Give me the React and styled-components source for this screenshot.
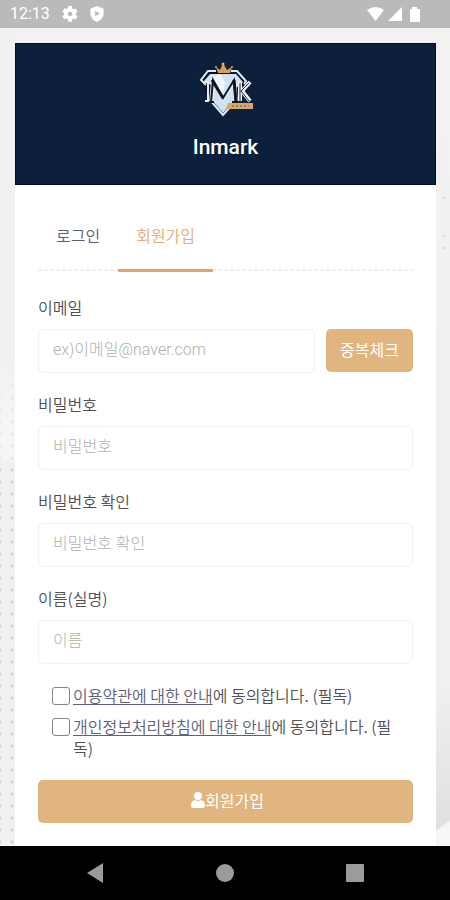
import React, { useState } from "react";
import styled, { createGlobalStyle } from "styled-components";

const GlobalStyle = createGlobalStyle`
  *, *::before, *::after { box-sizing: border-box; }
  body {
    margin: 0;
    font-family: "Noto Sans CJK KR", "Noto Sans", sans-serif;
    font-size: 16px;
    font-weight: 350;
    line-height: 22px;
    color: #505050;
  }
`;

const Screen = styled.div`
  display: flex;
  flex-direction: column;
  height: 100vh;
  background: #f1f1f1;
`;

const StatusBar = styled.header`
  display: flex;
  align-items: center;
  flex: none;
  height: 28px;
  padding: 0 30px 0 10px;
  gap: 12px;
  background: #bababa;
  color: #fff;
  font: 400 16px/28px Roboto, sans-serif;

  svg { display: block; }
`;

const SystemIcons = styled.div`
  display: flex;
  align-items: center;
  gap: 4px;
  margin-left: auto;
`;

const Viewport = styled.main`
  flex: 1;
  min-height: 0;
  overflow: hidden;
  padding: 15px 14px 0 15px;
  background:
    linear-gradient(#f1f1f1 320px, #f9f9f980 400px, #fafafa80 430px, transparent 434px) 0 0 / 15px 100% no-repeat,
    radial-gradient(circle at 12px 6px, #cfcfcf 1px, transparent 2px) 0 4px / 15px 12px repeat-y,
    radial-gradient(circle at 0 6px, #d4d4d4 1px, transparent 2px) 0 4px / 12px 12px repeat-y,
    radial-gradient(circle at 6px 6px, #dddddd 1px, transparent 2px) 100% 164px / 12px 12px no-repeat,
    radial-gradient(circle at 6px 6px, #dddddd 1px, transparent 2px) 100% 202px / 12px 12px no-repeat,
    radial-gradient(circle at 6px 6px, #dddddd 1px, transparent 2px) 100% 214px / 12px 12px no-repeat,
    linear-gradient(145deg, transparent 50%, #f6f6f6 54%) 100% 100% / 24px 36px no-repeat,
    linear-gradient(#f1f1f1, #f1f1f1) 0 0 / 15px 100% no-repeat,
    linear-gradient(#f2f2f2, #f0f0f0 80%, #dedede);
`;

const Card = styled.section`
  min-height: 100%;
  background: #fff;
`;

const Brand = styled.div`
  display: flex;
  flex-direction: column;
  align-items: center;
  height: 142px;
  padding-top: 18px;
  background: #0d203b;
  border: 1px solid #040b2c;
`;

const BrandName = styled.h1`
  margin: 16px 0 0;
  color: #fff;
  font: 500 21px/26px Roboto, sans-serif;
`;

const Content = styled.div`
  padding: 26px 23px 24px;
`;

const Tabs = styled.nav`
  display: flex;
  height: 60px;
  background: repeating-linear-gradient(90deg, #eeeff2 0 4px, transparent 4px 6px) 0 100% / 100% 2px no-repeat;
`;

const Tab = styled.a`
  height: 61px;
  padding: 13px 18px 0;
  border-bottom: 3px solid ${(p) => (p.$active ? "#e0a566" : "transparent")};
  border-radius: 1px;
  color: ${(p) => (p.$active ? "#e0ad72" : "#5b5e70")};
  text-decoration: none;
`;

const Form = styled.form`
  display: flex;
  flex-direction: column;
  gap: 20px;
  padding-top: 25px;
`;

const Field = styled.div`
  display: flex;
  flex-direction: column;
  gap: 11px;
`;

const Label = styled.label`
  line-height: 22px;
`;

const InputRow = styled.div`
  display: flex;
  gap: 11px;
`;

const TextInput = styled.input`
  flex: 1;
  min-width: 0;
  height: 44px;
  padding: 0 14px 4px;
  border: 1px solid #eff1f3;
  border-radius: 5px;
  background: #fff;
  color: #464646;
  font: inherit;
  font-family: Roboto, "Noto Sans CJK KR", sans-serif;
  font-weight: 300;

  &::placeholder { color: #b0b0b0; opacity: 1; }
`;

const Button = styled.button`
  display: flex;
  align-items: center;
  justify-content: center;
  height: 43px;
  padding: 0 14px 4px;
  border: 0;
  border-radius: 5px;
  background: #e0b580;
  color: #fff;
  font: inherit;
  font-weight: 400;
  white-space: nowrap;
  cursor: pointer;
`;

const SubmitButton = styled(Button)`
  padding-left: 18px;
`;

const Agreements = styled.div`
  display: flex;
  flex-direction: column;
  gap: 9px;
  padding: 0 14px 1px;
`;

const Agreement = styled.div`
  display: flex;
  align-items: flex-start;
  gap: 3px;
  word-break: break-all;
`;

const Checkbox = styled.input`
  appearance: none;
  flex: none;
  width: 18px;
  height: 18px;
  margin: 3px 0 0;
  border: 1px solid #858585;
  border-radius: 3px;
  background: #fff;

  &:checked { background: #e0b580; }
`;

const TermsLink = styled.a`
  color: #5c6078;
  text-decoration: underline;
  text-decoration-thickness: 1px;
  text-underline-offset: 2px;
`;

const NavBar = styled.footer`
  display: flex;
  flex: none;
  align-items: center;
  justify-content: space-between;
  height: 54px;
  padding: 0 85px;
  background: #000;
`;

const NavButton = styled.button`
  display: flex;
  padding: 0;
  border: 0;
  background: none;
  color: #9b9b9b;
`;

const GearIcon = () => (
  <svg width="16" height="16" viewBox="2 2 20 20" fill="currentColor" aria-hidden="true">
    <path d="M19.14 12.94c.04-.3.06-.61.06-.94s-.02-.64-.07-.94l2.03-1.58a.49.49 0 0 0 .12-.61l-1.92-3.32a.49.49 0 0 0-.59-.22l-2.39.96a7 7 0 0 0-1.62-.94l-.36-2.54A.48.48 0 0 0 13.92 2h-3.84a.48.48 0 0 0-.48.41l-.36 2.54c-.59.24-1.13.57-1.62.94l-2.39-.96a.48.48 0 0 0-.59.22L2.72 8.87a.48.48 0 0 0 .12.61l2.03 1.58a7 7 0 0 0 0 1.88l-2.03 1.58a.49.49 0 0 0-.12.61l1.92 3.32c.12.22.37.29.59.22l2.39-.96c.5.38 1.03.7 1.62.94l.36 2.54c.05.24.24.41.48.41h3.84c.24 0 .44-.17.48-.41l.36-2.54c.59-.24 1.13-.56 1.62-.94l2.39.96c.22.08.47 0 .59-.22l1.92-3.32a.48.48 0 0 0-.12-.61zM12 14.8a2.8 2.8 0 1 1 0-5.6 2.8 2.8 0 0 1 0 5.6z" />
  </svg>
);

const ShieldIcon = () => (
  <svg width="14" height="16" viewBox="0 0 14 17" fill="currentColor" fillRule="evenodd" aria-hidden="true">
    <path d="M7 0l7 3v5c0 4-3 7.500-7 9-4-1.500-7-5-7-9V3zM5 5v6l5-3z" />
  </svg>
);

const WifiIcon = () => (
  <svg width="17" height="14" viewBox="0 0 17 14" fill="currentColor" aria-hidden="true">
    <path d="M0 3Q8.500-3 17 3L8.500 14z" />
  </svg>
);

const SignalIcon = () => (
  <svg width="14" height="14" viewBox="0 0 14 14" fill="currentColor" aria-hidden="true">
    <path d="M14 0v14H0z" />
  </svg>
);

const BatteryIcon = () => (
  <svg width="14" height="15" viewBox="-4 0 14 15" fill="currentColor" aria-hidden="true">
    <path d="M2 0h5v2h2q1 0 1 1v11q0 1-1 1H1q-1 0-1-1V3q0-1 1-1h1z" />
  </svg>
);

const BrandLogo = () => (
  <svg width="56" height="56" viewBox="0 0 56 56" role="img" aria-label="Inmark">
    <path d="M10 9h29l9 11-9 19-14 14L12 39 7 27 2 20z" fill="#06122a" />
    <path d="M18 9h-8L3 18l5 5M33 9h6l9 10-2 3M12 38l13 15 9-10" fill="none" stroke="#e6ecf2" strokeWidth="2" />
    <path d="M12 12h26l7 8-7 6v13l-5 3-8 9-12-14V23l-7-4z" fill="#cfe1f5" />
    <path d="M22 12l5 8-2 13-12-17z" fill="#f0f6fd" />
    <path d="M13 41l2-22 10 17 11-17 2 22" fill="none" stroke="#e8eff7" strokeWidth="4" />
    <path d="M11 40h5M13 40l2-22 10 18 11-18 2 22M34 40h6" fill="none" stroke="#10151f" strokeWidth="2" />
    <path d="M14 18l11 18M36 18l2 22" fill="none" stroke="#10151f" strokeWidth="3" />
    <path d="M6 20h4v19H7" fill="none" stroke="#e6edf4" strokeWidth="2" />
    <path d="M42 20v19M52 20l-8 9 8 10" fill="none" stroke="#f1f4f7" strokeWidth="4" />
    <path d="M42 21v18M51 21l-8 8 8 10" fill="none" stroke="#19202b" strokeWidth="1" />
    <path d="M18 5l4 3 3-7 4 7 5-3-2 6H20z" fill="#dc9d55" />
    <circle cx="25" cy="2" r="1.500" fill="#edaa5c" />
    <circle cx="18" cy="5" r="1" fill="#edaa5c" />
    <circle cx="34" cy="5" r="1" fill="#edaa5c" />
    <path d="M30 41h25v6H28z" fill="#d9a76c" />
    <path d="M34 44h17" stroke="#a67d4f" strokeWidth="2" strokeDasharray="2 2" />
  </svg>
);

const UserIcon = () => (
  <svg width="14" height="16" viewBox="0 0 14 16" fill="currentColor" aria-hidden="true">
    <circle cx="7" cy="4" r="4" />
    <path d="M4 8q3 2 6 0q4 1 4 5v1q0 2-2 2H2q-2 0-2-2v-1q0-4 4-5z" />
  </svg>
);

const agreements = [
  { id: "terms", link: "이용약관에 대한 안내" },
  { id: "privacy", link: "개인정보처리방침에 대한 안내" },
];

export default function App() {
  const [accepted, setAccepted] = useState({});
  const toggle = (id) => setAccepted((a) => ({ ...a, [id]: !a[id] }));

  return (
    <Screen>
      <GlobalStyle />
      <StatusBar>
        <time>12:13</time>
        <GearIcon />
        <ShieldIcon />
        <SystemIcons>
          <WifiIcon />
          <SignalIcon />
          <BatteryIcon />
        </SystemIcons>
      </StatusBar>
      <Viewport>
        <Card>
          <Brand>
            <BrandLogo />
            <BrandName>Inmark</BrandName>
          </Brand>
          <Content>
            <Tabs>
              <Tab href="#login">로그인</Tab>
              <Tab href="#signup" $active aria-current="page">회원가입</Tab>
            </Tabs>
            <Form onSubmit={(e) => e.preventDefault()}>
              <Field>
                <Label htmlFor="email">이메일</Label>
                <InputRow>
                  <TextInput id="email" type="email" placeholder="ex)이메일@naver.com" />
                  <Button type="button">중복체크</Button>
                </InputRow>
              </Field>
              <Field>
                <Label htmlFor="password">비밀번호</Label>
                <InputRow>
                  <TextInput id="password" type="password" placeholder="비밀번호" />
                </InputRow>
              </Field>
              <Field>
                <Label htmlFor="confirm">비밀번호 확인</Label>
                <InputRow>
                  <TextInput id="confirm" type="password" placeholder="비밀번호 확인" />
                </InputRow>
              </Field>
              <Field>
                <Label htmlFor="name">이름(실명)</Label>
                <InputRow>
                  <TextInput id="name" type="text" placeholder="이름" />
                </InputRow>
              </Field>
              <Agreements>
                {agreements.map(({ id, link }) => (
                  <Agreement key={id}>
                    <Checkbox
                      id={id}
                      type="checkbox"
                      checked={!!accepted[id]}
                      onChange={() => toggle(id)}
                    />
                    <label htmlFor={id}>
                      <TermsLink href={`#${id}`}>{link}</TermsLink>에 동의합니다. (필독)
                    </label>
                  </Agreement>
                ))}
              </Agreements>
              <SubmitButton type="submit">
                <UserIcon />
                회원가입
              </SubmitButton>
            </Form>
          </Content>
        </Card>
      </Viewport>
      <NavBar>
        <NavButton type="button" aria-label="Back">
          <svg width="20" height="20" viewBox="0 0 20 20" fill="currentColor"><path d="M18 0v20L2 10z" /></svg>
        </NavButton>
        <NavButton type="button" aria-label="Home">
          <svg width="18" height="18" viewBox="0 0 18 18" fill="currentColor"><circle cx="9" cy="9" r="9" /></svg>
        </NavButton>
        <NavButton type="button" aria-label="Recent apps">
          <svg width="20" height="20" viewBox="0 0 20 20" fill="currentColor"><rect x="1" y="1" width="18" height="18" rx="1" /></svg>
        </NavButton>
      </NavBar>
    </Screen>
  );
}
